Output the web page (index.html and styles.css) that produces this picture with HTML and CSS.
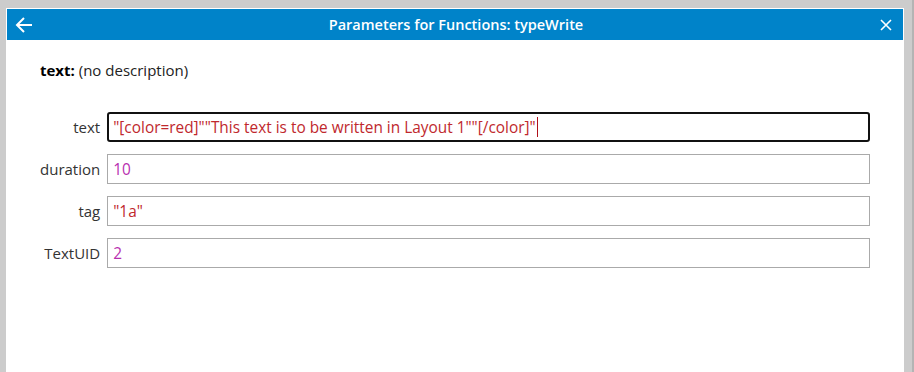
FILE: index.html
```html
<!DOCTYPE html>
<html lang="en">
<head>
    <meta charset="UTF-8">
    <title>Parameters for Functions: typeWrite</title>
    <link rel="stylesheet" href="styles.css">
</head>
<body>
    <div class="dialog">
        <div class="dialog-header">
            <span class="header-btn back">
                <svg width="18" height="18" viewBox="0 0 18 18">
                    <path d="M17 9H2M9 2L2 9l7 7" fill="none" stroke="#fff" stroke-width="2"/>
                </svg>
            </span>
            <div class="dialog-title">Parameters for Functions: typeWrite</div>
            <span class="header-btn close">
                <svg width="12" height="12" viewBox="0 0 12 12">
                    <path d="M1 1l10 10M11 1L1 11" fill="none" stroke="#fff" stroke-width="1.6"/>
                </svg>
            </span>
        </div>

        <div class="dialog-body">
            <p class="param-desc"><b>text:</b> (no description)</p>

            <div class="param-form">
                <label class="param-label">text</label>
                <div class="param-input focused"><span class="str">"[color=red]""This text is to be written in Layout 1""[/color]"</span><span class="caret"></span></div>

                <label class="param-label">duration</label>
                <div class="param-input"><span class="num">10</span></div>

                <label class="param-label">tag</label>
                <div class="param-input"><span class="str">"1a"</span></div>

                <label class="param-label">TextUID</label>
                <div class="param-input"><span class="num">2</span></div>
            </div>
        </div>
    </div>
</body>
</html>
```

FILE: styles.css
```css
html, body {
    height: 100%;
}
body {
    margin: 0;
    background: #cccccc;
    box-shadow: inset -2px 0 #b4b4b4;
    font-family: "Open Sans", "Noto Sans", sans-serif;
    font-size: 15px;
    color: #222;
    overflow: hidden;
}
.dialog {
    box-sizing: border-box;
    margin: 8px 10px 0 6px;
    height: calc(100% - 8px);
    border: 1px solid #fff;
    border-bottom: none;
    background: #fff;
}
.dialog-header {
    display: flex;
    align-items: center;
    height: 31px;
    background: #0083c9;
    color: #fff;
}
.header-btn {
    display: flex;
    align-items: center;
    justify-content: center;
    width: 34px;
    height: 31px;
}
.header-btn.back {
    padding-right: 2px;
}
.header-btn.close {
    padding-left: 2px;
}
.dialog-title {
    flex: 1;
    text-align: center;
    font-weight: 600;
    font-size: 14.5px;
    padding-left: 2px;
}
.dialog-body {
    padding: 20px 33px 0 33px;
}
.param-desc {
    margin: 0 0 32px 0;
    color: #222;
}
.param-desc b {
    color: #000;
}
.param-form {
    display: grid;
    grid-template-columns: auto 1fr;
    column-gap: 7px;
    row-gap: 12px;
}
.param-label {
    align-self: center;
    text-align: right;
    color: #333;
}
.param-input {
    box-sizing: border-box;
    display: flex;
    align-items: center;
    height: 30px;
    padding: 0 5px;
    border: 1px solid #aaaaaa;
    font-size: 15.4px;
    white-space: nowrap;
}
.param-input.focused {
    border: 2px solid #111;
    border-radius: 3px;
    padding: 0 4px;
}
.str {
    color: #c0282d;
}
.num {
    color: #b82fb0;
}
.caret {
    display: inline-block;
    width: 1px;
    height: 20px;
    background: #b0101a;
    margin-left: 1px;
}
```
